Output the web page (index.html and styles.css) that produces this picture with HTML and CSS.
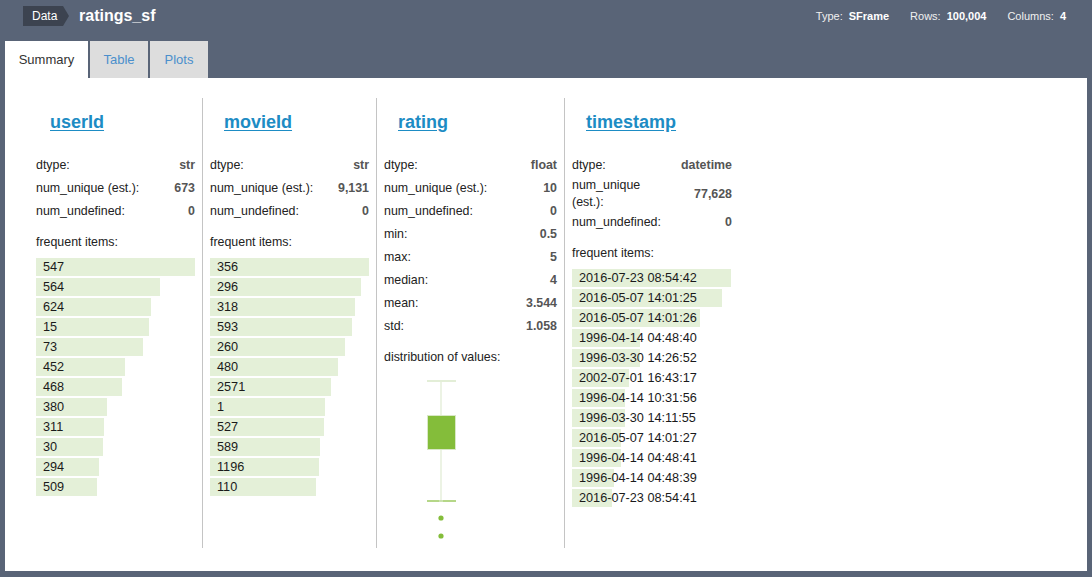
FILE: index.html
```html
<!DOCTYPE html>
<html>
<head>
<meta charset="utf-8">
<link rel="stylesheet" href="styles.css">
</head>
<body>
<div class="topbar">
  <div class="badge">Data</div>
  <div class="title">ratings_sf</div>
  <div class="meta">
    <div class="meta-item"><span>Type:</span><b>SFrame</b></div>
    <div class="meta-item"><span>Rows:</span><b>100,004</b></div>
    <div class="meta-item"><span>Columns:</span><b>4</b></div>
  </div>
</div>
<div class="tabs">
  <div class="tab active">Summary</div>
  <div class="tab">Table</div>
  <div class="tab">Plots</div>
</div>
<div class="panel">
  <div class="col">
    <a class="col-title">userId</a>
    <table class="stats">
      <tr><td>dtype:</td><td class="val">str</td></tr>
      <tr><td>num_unique (est.):</td><td class="val">673</td></tr>
      <tr><td>num_undefined:</td><td class="val">0</td></tr>
    </table>
    <div class="section">frequent items:</div>
    <div class="bars">
      <div class="bar" style="width:159px">547</div>
      <div class="bar" style="width:124px">564</div>
      <div class="bar" style="width:115px">624</div>
      <div class="bar" style="width:113px">15</div>
      <div class="bar" style="width:107px">73</div>
      <div class="bar" style="width:89px">452</div>
      <div class="bar" style="width:86px">468</div>
      <div class="bar" style="width:71px">380</div>
      <div class="bar" style="width:68px">311</div>
      <div class="bar" style="width:67px">30</div>
      <div class="bar" style="width:63px">294</div>
      <div class="bar" style="width:61px">509</div>
    </div>
  </div>
  <div class="col">
    <a class="col-title">movieId</a>
    <table class="stats">
      <tr><td>dtype:</td><td class="val">str</td></tr>
      <tr><td>num_unique (est.):</td><td class="val">9,131</td></tr>
      <tr><td>num_undefined:</td><td class="val">0</td></tr>
    </table>
    <div class="section">frequent items:</div>
    <div class="bars">
      <div class="bar" style="width:159px">356</div>
      <div class="bar" style="width:151px">296</div>
      <div class="bar" style="width:145px">318</div>
      <div class="bar" style="width:142px">593</div>
      <div class="bar" style="width:135px">260</div>
      <div class="bar" style="width:128px">480</div>
      <div class="bar" style="width:121px">2571</div>
      <div class="bar" style="width:115px">1</div>
      <div class="bar" style="width:114px">527</div>
      <div class="bar" style="width:110px">589</div>
      <div class="bar" style="width:109px">1196</div>
      <div class="bar" style="width:106px">110</div>
    </div>
  </div>
  <div class="col wide">
    <a class="col-title">rating</a>
    <table class="stats">
      <tr><td>dtype:</td><td class="val">float</td></tr>
      <tr><td>num_unique (est.):</td><td class="val">10</td></tr>
      <tr><td>num_undefined:</td><td class="val">0</td></tr>
      <tr><td>min:</td><td class="val">0.5</td></tr>
      <tr><td>max:</td><td class="val">5</td></tr>
      <tr><td>median:</td><td class="val">4</td></tr>
      <tr><td>mean:</td><td class="val">3.544</td></tr>
      <tr><td>std:</td><td class="val">1.058</td></tr>
    </table>
    <div class="section">distribution of values:</div>
    <svg class="boxplot" width="173" height="180" viewBox="0 0 173 180">
      <line x1="57" y1="15" x2="57" y2="135" stroke="#e6efdb" stroke-width="1.5"/>
      <line x1="43" y1="15" x2="72" y2="15" stroke="#e3eed7" stroke-width="2"/>
      <rect x="43.5" y="49.5" width="28" height="34" fill="#84bd3a" stroke="#d9e8c6" stroke-width="1"/>
      <line x1="43" y1="135" x2="72" y2="135" stroke="#84bd3a" stroke-width="1.2"/>
      <line x1="55" y1="135" x2="59" y2="135" stroke="#dce9cc" stroke-width="1.2"/>
      <circle cx="57" cy="152" r="2.6" fill="#84bd3a"/>
      <circle cx="57" cy="170" r="2.6" fill="#84bd3a"/>
    </svg>
  </div>
  <div class="col last">
    <a class="col-title">timestamp</a>
    <table class="stats">
      <tr><td>dtype:</td><td class="val">datetime</td></tr>
      <tr><td>num_unique<br>(est.):</td><td class="val">77,628</td></tr>
      <tr><td>num_undefined:</td><td class="val">0</td></tr>
    </table>
    <div class="section">frequent items:</div>
    <div class="bars">
      <div class="bar" style="width:159px">2016-07-23 08:54:42</div>
      <div class="bar" style="width:150px">2016-05-07 14:01:25</div>
      <div class="bar" style="width:128px">2016-05-07 14:01:26</div>
      <div class="bar" style="width:68px">1996-04-14 04:48:40</div>
      <div class="bar" style="width:68px">1996-03-30 14:26:52</div>
      <div class="bar" style="width:57px">2002-07-01 16:43:17</div>
      <div class="bar" style="width:53px">1996-04-14 10:31:56</div>
      <div class="bar" style="width:53px">1996-03-30 14:11:55</div>
      <div class="bar" style="width:49px">2016-05-07 14:01:27</div>
      <div class="bar" style="width:49px">1996-04-14 04:48:41</div>
      <div class="bar" style="width:42px">1996-04-14 04:48:39</div>
      <div class="bar" style="width:40px">2016-07-23 08:54:41</div>
    </div>
  </div>
</div>
</body>
</html>
```
FILE: styles.css
```css
* { box-sizing: border-box; }
html, body { margin: 0; padding: 0; }
body {
  background: #596477;
  font-family: "Liberation Sans", Arial, Helvetica, sans-serif;
  color: #222;
  width: 1092px;
  height: 577px;
  overflow: hidden;
}
.topbar {
  height: 32px;
  display: flex;
  align-items: center;
  padding: 0 26px 0 23px;
}
.badge {
  position: relative;
  height: 20px;
  width: 40px;
  background: #3c4350;
  color: #fff;
  font-size: 12px;
  line-height: 20px;
  padding-left: 9px;
}
.badge::after {
  content: "";
  position: absolute;
  left: 40px;
  top: 0;
  border-top: 10px solid transparent;
  border-bottom: 10px solid transparent;
  border-left: 6px solid #3c4350;
}
.title {
  margin-left: 16px;
  color: #fff;
  font-weight: bold;
  font-size: 16px;
  margin-top: -1px;
}
.meta {
  margin-left: auto;
  display: flex;
  gap: 21px;
  font-size: 11px;
  color: #f0f0f0;
}
.meta-item { display: flex; gap: 6px; }
.meta-item b { color: #fff; }
.tabs {
  margin-top: 9px;
  display: flex;
  padding-left: 5px;
  gap: 2px;
  height: 37px;
}
.tab {
  background: #dddddd;
  color: #4b8fcc;
  font-size: 13px;
  line-height: 37px;
  padding: 0 12px;
  width: 58px;
  text-align: center;
}
.tab.active {
  background: #fff;
  color: #333;
  width: 83px;
}
.panel {
  margin: 0 5px;
  height: 493px;
  background: #fff;
  display: flex;
  padding: 20px 0 0 24px;
}
.col {
  width: 174px;
  height: 450px;
  padding: 0 7px;
  border-right: 1px solid #c4c4c4;
}
.col.wide { width: 188px; }
.col.last { border-right: none; }
.col-title {
  display: inline-block;
  margin: 13px 0 21px 14px;
  font-size: 18px;
  line-height: 22px;
  font-weight: bold;
  color: #1d8cc4;
  text-decoration: underline;
  text-underline-offset: 2px;
}
.stats {
  width: 100%;
  border-collapse: collapse;
  border-spacing: 0;
  font-size: 12.4px;
}
.stats tr { height: 23px; }
.stats td {
  padding: 0;
  line-height: 17px;
  vertical-align: middle;
  color: #222;
}
.stats td.val {
  text-align: right;
  font-weight: bold;
  color: #555;
  white-space: nowrap;
  padding-left: 8px;
}
.section {
  margin-top: 11px;
  font-size: 12.4px;
  line-height: 17px;
}
.bars { margin-top: 7px; }
.bar {
  height: 18px;
  margin-bottom: 2px;
  background: #e4f0d8;
  font-size: 12.7px;
  line-height: 18px;
  padding-left: 7px;
  white-space: nowrap;
  color: #1a1a1a;
}
.boxplot { display: block; }
```
